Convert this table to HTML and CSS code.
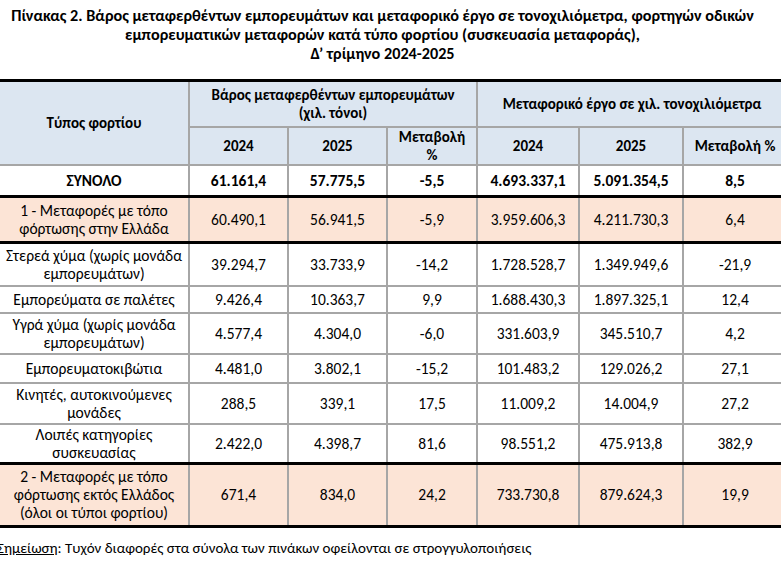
FILE: index.html
```html
<!DOCTYPE html>
<html lang="el">
<head>
    <meta charset="UTF-8">
    <meta name="viewport" content="width=device-width, initial-scale=1.0">
    <title>Πίνακας 2</title>
    <link rel="stylesheet" href="styles.css">
</head>
<body>
    <div class="page">
        <!-- Τίτλος πίνακα -->
        <h1 class="title">
            Πίνακας 2. Βάρος μεταφερθέντων εμπορευμάτων και μεταφορικό έργο σε τονοχιλιόμετρα, φορτηγών οδικών<br>
            εμπορευματικών μεταφορών κατά τύπο φορτίου (συσκευασία μεταφοράς),<br>
            Δ’ τρίμηνο 2024-2025
        </h1>

        <table class="data">
            <colgroup>
                <col class="c-type">
                <col class="c-num">
                <col class="c-num">
                <col class="c-pct">
                <col class="c-big">
                <col class="c-big2">
                <col class="c-pct2">
            </colgroup>
            <thead>
                <tr class="h1">
                    <th rowspan="2">Τύπος φορτίου</th>
                    <th colspan="3">Βάρος μεταφερθέντων εμπορευμάτων<br>(χιλ. τόνοι)</th>
                    <th colspan="3">Μεταφορικό έργο σε χιλ. τονοχιλιόμετρα</th>
                </tr>
                <tr class="h2">
                    <th>2024</th>
                    <th>2025</th>
                    <th>Μεταβολή<br>%</th>
                    <th>2024</th>
                    <th>2025</th>
                    <th>Μεταβολή %</th>
                </tr>
            </thead>
            <tbody>
                <tr class="total">
                    <td>ΣΥΝΟΛΟ</td>
                    <td>61.161,4</td>
                    <td>57.775,5</td>
                    <td>-5,5</td>
                    <td>4.693.337,1</td>
                    <td>5.091.354,5</td>
                    <td>8,5</td>
                </tr>
                <tr class="group g1">
                    <td>1 - Μεταφορές με τόπο<br>φόρτωσης στην Ελλάδα</td>
                    <td>60.490,1</td>
                    <td>56.941,5</td>
                    <td>-5,9</td>
                    <td>3.959.606,3</td>
                    <td>4.211.730,3</td>
                    <td>6,4</td>
                </tr>
                <tr class="r43">
                    <td>Στερεά χύμα (χωρίς μονάδα<br>εμπορευμάτων)</td>
                    <td>39.294,7</td>
                    <td>33.733,9</td>
                    <td>-14,2</td>
                    <td>1.728.528,7</td>
                    <td>1.349.949,6</td>
                    <td>-21,9</td>
                </tr>
                <tr class="r27">
                    <td>Εμπορεύματα σε παλέτες</td>
                    <td>9.426,4</td>
                    <td>10.363,7</td>
                    <td>9,9</td>
                    <td>1.688.430,3</td>
                    <td>1.897.325,1</td>
                    <td>12,4</td>
                </tr>
                <tr class="r41">
                    <td>Υγρά χύμα (χωρίς μονάδα<br>εμπορευμάτων)</td>
                    <td>4.577,4</td>
                    <td>4.304,0</td>
                    <td>-6,0</td>
                    <td>331.603,9</td>
                    <td>345.510,7</td>
                    <td>4,2</td>
                </tr>
                <tr class="r29">
                    <td>Εμπορευματοκιβώτια</td>
                    <td>4.481,0</td>
                    <td>3.802,1</td>
                    <td>-15,2</td>
                    <td>101.483,2</td>
                    <td>129.026,2</td>
                    <td>27,1</td>
                </tr>
                <tr class="r41">
                    <td>Κινητές, αυτοκινούμενες<br>μονάδες</td>
                    <td>288,5</td>
                    <td>339,1</td>
                    <td>17,5</td>
                    <td>11.009,2</td>
                    <td>14.004,9</td>
                    <td>27,2</td>
                </tr>
                <tr class="r40">
                    <td>Λοιπές κατηγορίες<br>συσκευασίας</td>
                    <td>2.422,0</td>
                    <td>4.398,7</td>
                    <td>81,6</td>
                    <td>98.551,2</td>
                    <td>475.913,8</td>
                    <td>382,9</td>
                </tr>
                <tr class="group g2">
                    <td>2 - Μεταφορές με τόπο<br>φόρτωσης εκτός Ελλάδος<br>(όλοι οι τύποι φορτίου)</td>
                    <td>671,4</td>
                    <td>834,0</td>
                    <td>24,2</td>
                    <td>733.730,8</td>
                    <td>879.624,3</td>
                    <td>19,9</td>
                </tr>
            </tbody>
        </table>

        <p class="note"><u>Σημείωση</u>: Τυχόν διαφορές στα σύνολα των πινάκων οφείλονται σε στρογγυλοποιήσεις</p>
    </div>
</body>
</html>
```

FILE: styles.css
```css
body {
    margin: 0;
    padding: 0;
    background-color: #ffffff;
    font-family: Calibri, "Open Sans", sans-serif;
    color: #000000;
    overflow: hidden;
}
.page {
    width: 781px;
    overflow: hidden;
}
.title {
    margin: 6px 0 0;
    padding-right: 16px;
    text-align: center;
    font-size: 16.2px;
    line-height: 19px;
    font-weight: bold;
    height: 73px;
}
.data {
    border-collapse: collapse;
    table-layout: fixed;
    width: 787px;
    margin-left: -2px;
    font-size: 15.5px;
    line-height: 18px;
}
.c-type { width: 190px; }
.c-num { width: 99px; }
.c-pct { width: 90px; }
.c-big { width: 102px; }
.c-big2 { width: 104px; }
.c-pct2 { width: 104px; }
th, td {
    border: 2px solid #a6a6a6;
    text-align: center;
    vertical-align: middle;
    padding: 0 1px;
}
thead th {
    background-color: #dce6f1;
    font-weight: bold;
    font-size: 15px;
}
thead .h1 th {
    border-top: 3px solid #000000;
    height: 44px;
}
thead .h2 th {
    height: 35px;
}
.total td {
    font-weight: bold;
    height: 29px;
    border-bottom: 3px solid #000000;
}
.group td {
    background-color: #fce4d6;
    border-bottom: 3px solid #000000;
}
.g1 td { height: 43px; }
.g2 td { height: 60px; }
.r43 td { height: 41px; }
.r27 td { height: 25px; }
.r41 td { height: 39px; }
.r29 td { height: 27px; }
.r40 td { height: 37px; border-bottom: 3px solid #000000; }
.note {
    margin: 11px 0 0 -3px;
    font-size: 15px;
    line-height: 18px;
}
```
